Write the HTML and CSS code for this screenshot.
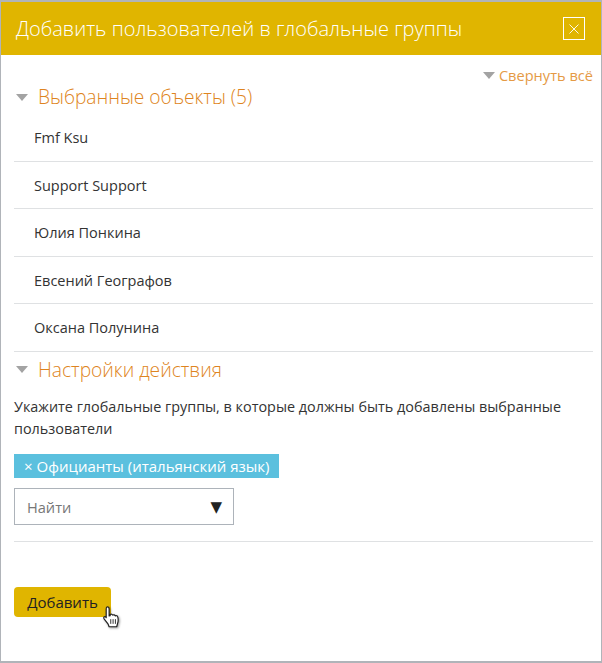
FILE: index.html
```html
<!DOCTYPE html>
<html lang="ru">
<head>
  <meta charset="UTF-8" />
  <title>Добавить пользователей в глобальные группы</title>
  <link rel="stylesheet" href="styles.css">
</head>
<body>
  <div class="dialog">
    <div class="dialog-header">
      <h1 class="dialog-title">Добавить пользователей в глобальные группы</h1>
      <button class="close-button" type="button" aria-label="Закрыть">
        <svg width="12" height="12" viewBox="0 0 12 12"><path d="M1.500 1.500l9 9M10.500 1.500l-9 9" stroke="#fff" stroke-width=".9" fill="none"/></svg>
      </button>
    </div>

    <div class="dialog-body">
      <div class="collapse-row">
        <span class="arrow arrow-small"></span>
        <a class="collapse-link">Свернуть всё</a>
      </div>

      <h2 class="section-title"><span class="arrow"></span>Выбранные объекты (5)</h2>
      <ul class="user-list">
        <li>Fmf Ksu</li>
        <li>Support Support</li>
        <li>Юлия Понкина</li>
        <li>Евсений Географов</li>
        <li>Оксана Полунина</li>
      </ul>

      <h2 class="section-title section-settings"><span class="arrow"></span>Настройки действия</h2>
      <p class="hint">Укажите глобальные группы, в которые должны быть добавлены выбранные пользователи</p>

      <div class="tag"><span class="tag-remove">×</span>Официанты (итальянский язык)</div>

      <div class="search-select">
        <span class="search-text">Найти</span>
        <span class="search-arrow">▼</span>
      </div>

      <div class="divider"></div>

      <button class="add-button" type="button">Добавить</button>
      <svg class="cursor" width="21" height="26" viewBox="0 0 18 22">
        <path d="M4.500 1.500c1 0 1.600.7 1.600 1.700v6l.9-.2V8c.9-.5 1.800-.3 2.100.5.9-.5 1.900-.2 2.200.7.9-.4 2-.1 2.200.9.5 1.700.400 4-.2 5.700l-.7 2.700H6.100l-1-2.500L1.800 11.700c-.6-.9-.2-1.900.7-1.900.6 0 1.100.4 1.100.9V3.200c0-1 .100-1.700.9-1.700z" fill="#fff" stroke="#222" stroke-width="1" stroke-linejoin="round"/>
        <path d="M7.500 12v4M9.500 12v4M11.500 12v4" stroke="#222" stroke-width=".8" fill="none"/>
      </svg>
    </div>
  </div>
</body>
</html>
```

FILE: styles.css
```css
* {
  box-sizing: border-box;
  margin: 0;
  padding: 0;
}

html, body {
  height: 100%;
}

body {
  background-color: #fff;
  font-family: "Open Sans", sans-serif;
  color: #333;
  font-size: 14.4px;
}

.dialog {
  height: 663px;
  border: 1px solid #b0b4b9;
  border-top-width: 2px;
  border-bottom-width: 2px;
  display: flex;
  flex-direction: column;
}

.dialog-header {
  height: 53px;
  background-color: #e0b500;
  display: flex;
  align-items: center;
  justify-content: space-between;
  padding: 0 16px 0 15px;
}

.dialog-title {
  font-size: 20px;
  font-weight: 300;
  color: #fff;
  line-height: 24px;
}

.close-button {
  width: 22px;
  height: 23px;
  background: none;
  border: 1px solid #fff;
  display: flex;
  align-items: center;
  justify-content: center;
}

.dialog-body {
  position: relative;
  flex: 1;
  padding: 0 8px 0 13px;
}

.collapse-row {
  padding-top: 10px;
  display: flex;
  justify-content: flex-end;
  align-items: center;
  gap: 4px;
  line-height: 20px;
  box-sizing: content-box;
  height: 20px;
}

.collapse-link {
  color: #e59a45;
  font-size: 14.6px;
}

.arrow {
  display: inline-block;
  width: 0;
  height: 0;
  border-left: 6px solid transparent;
  border-right: 6px solid transparent;
  border-top: 7px solid #a3a3a3;
  margin: 0 10px 3px 2px;
  vertical-align: middle;
}

.arrow-small {
  margin: 0;
}

.section-title {
  font-size: 19.2px;
  font-weight: 300;
  color: #de8420;
  line-height: 24px;
  height: 24px;
}

.user-list {
  list-style: none;
  margin-top: 5px;
}

.user-list li {
  height: 47.5px;
  line-height: 22px;
  padding: 13px 20px 0;
  border-bottom: 1px solid #dfe1e3;
  font-size: 14.5px;
}

.section-settings {
  margin-top: 6px;
}

.hint {
  margin-top: 14px;
  line-height: 22px;
}

.tag {
  width: 265px;
  height: 24px;
  margin-top: 14px;
  background-color: #5bc0de;
  color: #fff;
  line-height: 24px;
  padding-left: 10px;
  font-size: 15px;
  display: flex;
  gap: 4px;
}

.search-select {
  width: 220px;
  height: 37px;
  margin-top: 10px;
  border: 1px solid #adb3ba;
  display: flex;
  align-items: center;
  justify-content: space-between;
  padding: 1px 11px 0 12px;
}

.search-text {
  color: #777;
  font-size: 14.6px;
}

.search-arrow {
  color: #222;
  font-size: 15px;
  font-family: "DejaVu Sans", sans-serif;
}

.divider {
  margin-top: 16px;
  border-top: 1px solid #dfe1e3;
}

.add-button {
  display: block;
  margin-top: 45px;
  width: 97px;
  height: 30px;
  background-color: #e0b500;
  border: none;
  border-radius: 4px;
  color: #222;
  font-family: inherit;
  font-size: 15px;
}

.cursor {
  position: absolute;
  left: 101px;
  top: 550px;
  filter: drop-shadow(1px 1px 1px rgba(0, 0, 0, 0.4));
}
```
